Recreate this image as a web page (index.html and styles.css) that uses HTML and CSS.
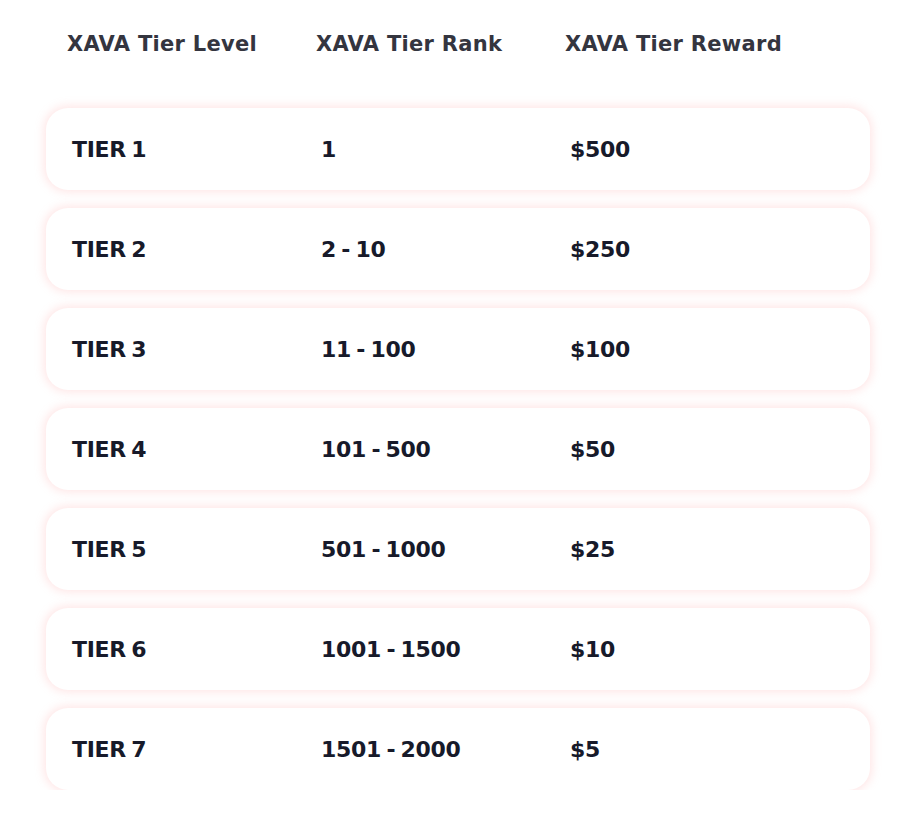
FILE: index.html
```html
<!DOCTYPE html>
<html>
<head>
<meta charset="utf-8">
<link rel="stylesheet" href="styles.css">
</head>
<body>
<div class="tiers">
  <div class="head">
    <div>XAVA Tier Level</div>
    <div>XAVA Tier Rank</div>
    <div>XAVA Tier Reward</div>
  </div>
  <div class="rows">
    <div class="row"><div>TIER 1</div><div>1</div><div>$500</div></div>
    <div class="row"><div>TIER 2</div><div>2 - 10</div><div>$250</div></div>
    <div class="row"><div>TIER 3</div><div>11 - 100</div><div>$100</div></div>
    <div class="row"><div>TIER 4</div><div>101 - 500</div><div>$50</div></div>
    <div class="row"><div>TIER 5</div><div>501 - 1000</div><div>$25</div></div>
    <div class="row"><div>TIER 6</div><div>1001 - 1500</div><div>$10</div></div>
    <div class="row"><div>TIER 7</div><div>1501 - 2000</div><div>$5</div></div>
  </div>
</div>
</body>
</html>
```
FILE: styles.css
```css
html, body { margin: 0; padding: 0; background: #ffffff; }
.tiers { width: 824px; margin-left: 46px; padding-top: 29px; }
.head {
  display: grid;
  grid-template-columns: 249px 249px 249px;
  padding-left: 21px;
  height: 30px;
  align-items: center;
  font-family: "DejaVu Sans", sans-serif;
  font-weight: 700;
  font-size: 21px;
  letter-spacing: 0.3px;
  color: #34353f;
}
.rows { margin-top: 49px; display: flex; flex-direction: column; gap: 18px; }
.row {
  display: grid;
  grid-template-columns: 249px 249px 249px;
  align-items: center;
  height: 82px;
  padding-left: 26px;
  background: #fff;
  border-radius: 22px;
  box-shadow: 0 0 10px 2px rgba(255, 160, 160, 0.28);
  font-family: "DejaVu Sans", sans-serif;
  font-weight: 700;
  font-size: 22px;
  letter-spacing: -0.3px;
  word-spacing: -2px;
  color: #171a2a;
}
```
